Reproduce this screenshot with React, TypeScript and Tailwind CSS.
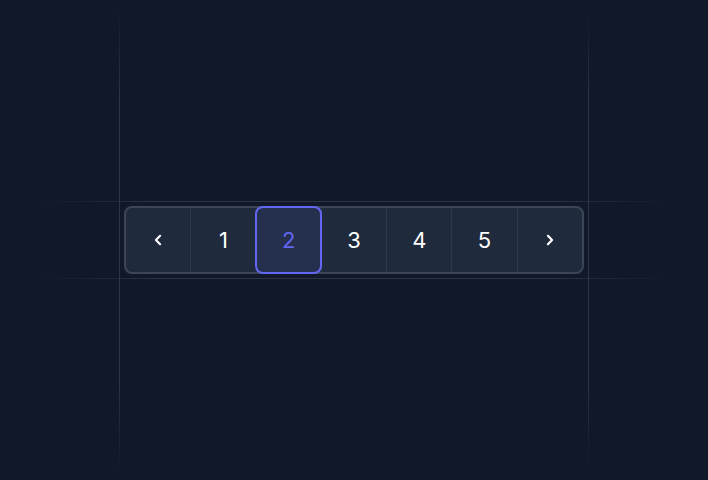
import React from "react";

const Chevron = ({ dir }: { dir: "left" | "right" }) => (
  <svg width="20" height="20" viewBox="0 0 24 24" fill="none" stroke="currentColor" strokeWidth="2.6" strokeLinecap="round" strokeLinejoin="round">
    {dir === "left" ? <path d="M14.5 17l-5-5 5-5" /> : <path d="M9.5 17l5-5-5-5" />}
  </svg>
);

export default function App() {
  const items: string[] = ["prev", "1", "2", "3", "4", "5", "next"];
  return (
    <div className="w-full h-[480px] bg-[#111827] flex items-center justify-center" style={{ fontFamily: "Inter, 'Noto Sans', sans-serif" }}>
      <div className="relative p-[5px]">
        <div className="absolute left-0 top-[-191px] h-[460px] w-px bg-[linear-gradient(to_bottom,transparent,#2d3646_20%,#2d3646_80%,transparent)]" />
        <div className="absolute right-0 top-[-191px] h-[460px] w-px bg-[linear-gradient(to_bottom,transparent,#2d3646_20%,#2d3646_80%,transparent)]" />
        <div className="absolute top-0 left-[-79px] right-[-82px] h-px bg-[linear-gradient(to_right,transparent,#2d3646_20%,#2d3646_80%,transparent)]" />
        <div className="absolute bottom-0 left-[-79px] right-[-82px] h-px bg-[linear-gradient(to_right,transparent,#2d3646_20%,#2d3646_80%,transparent)]" />
        <div className="flex w-[460px] h-[68px] rounded-lg border-2 border-[#3d4555] bg-[#1f2a3d] divide-x divide-[#2e3848]">
          {items.map((it, i) => {
            const active = it === "2";
            return (
              <div key={i} className="relative flex-1 flex items-center justify-center text-white text-[22px]">
                {active && (
                  <div className="absolute -top-[2px] -bottom-[2px] -left-[2px] -right-px rounded-lg border-2 border-[#6366f1] bg-[#252f4e]" />
                )}
                <span className={"relative flex items-center " + (active ? "text-[#6366f1]" : "")}>
                  {it === "prev" ? <Chevron dir="left" /> : it === "next" ? <Chevron dir="right" /> : it}
                </span>
              </div>
            );
          })}
        </div>
      </div>
    </div>
  );
}
